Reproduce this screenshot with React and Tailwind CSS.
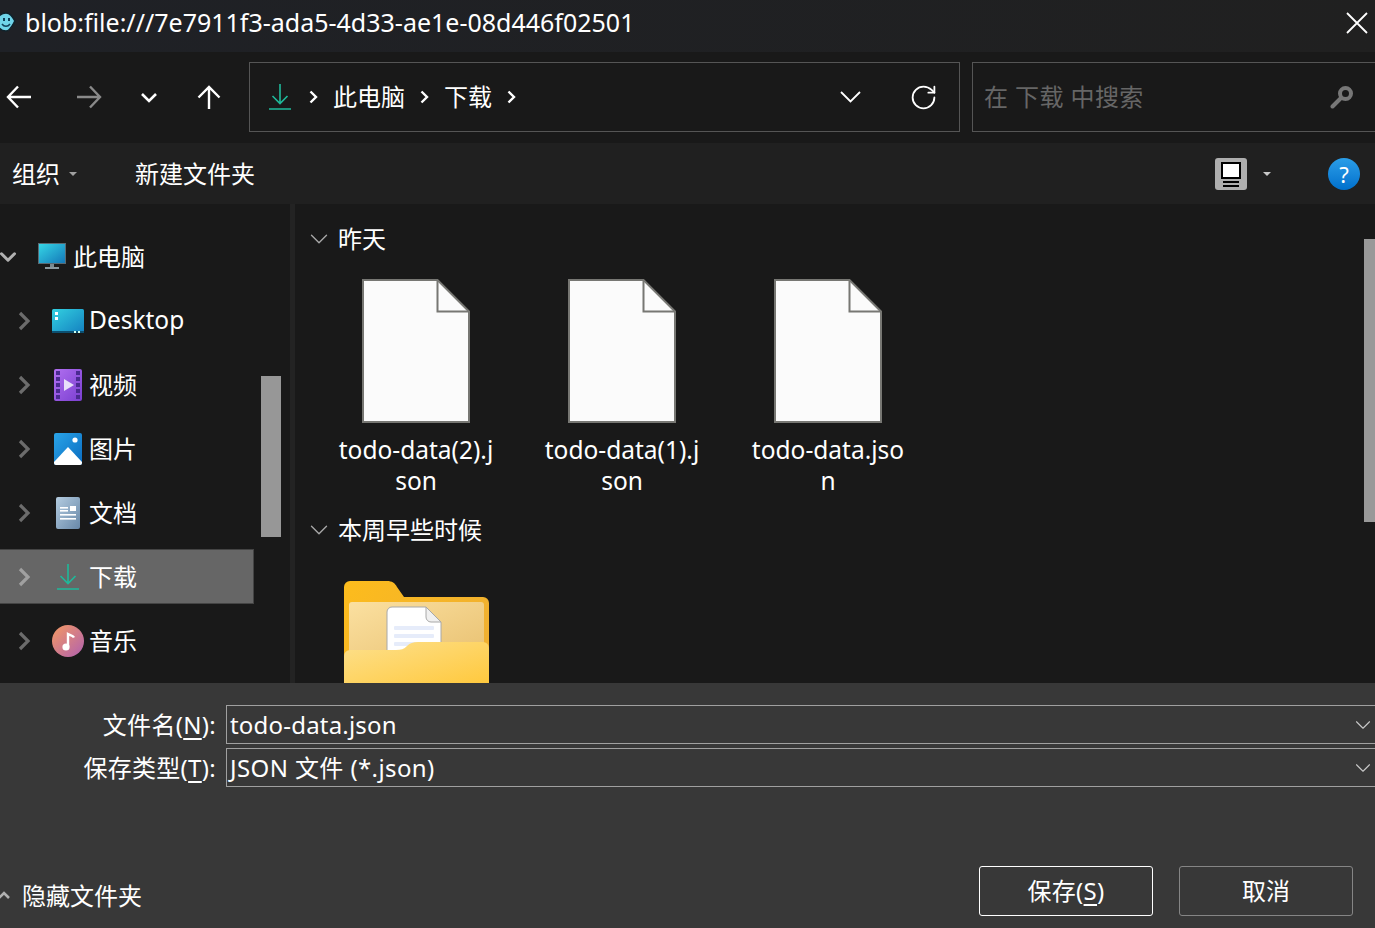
import { ChevronDown, RotateCw } from 'lucide-react'

const FONT = 'font-["Noto_Sans","Noto_Sans_CJK_SC",sans-serif]'

// ── Small line glyphs ────────────────────────────────────────────
function Arrow({ d, className = '', width = 26, height = 24, strokeWidth = 2.4 }) {
  return (
    <svg width={width} height={height} viewBox={`0 0 ${width} ${height}`} fill="none" stroke="currentColor" strokeWidth={strokeWidth} className={`shrink-0 ${className}`}>
      <path d={d} />
    </svg>
  )
}

function Crumb({ className = '' }) {
  return (
    <svg width="9" height="14" viewBox="0 0 9 14" fill="none" stroke="#ffffff" strokeWidth="2.400" className={`shrink-0 ${className}`}>
      <path d="M1.500 1.500L7 7l-5.500 5.500" />
    </svg>
  )
}

function AppIcon() {
  return (
    <svg width="19" height="20" viewBox="0 0 19 20" className="-ml-[3px] mr-[9px] shrink-0">
      <path d="M0 9a9 9 0 019-8c4 0 6 3 9 8-3 5-5 10-9 10a9 9 0 01-9-10z" fill="#6fd4ea" stroke="#10232c" strokeWidth="1.500" />
      <rect x="6" y="6" width="2" height="3" fill="#10405a" />
      <rect x="11" y="6" width="2" height="3" fill="#10405a" />
      <path d="M5 12c2 3 6 3 8 0" fill="none" stroke="#10405a" strokeWidth="1.500" />
    </svg>
  )
}

// ── Navigation tree icons ────────────────────────────────────────
function DownloadIcon({ size = 26 }) {
  return (
    <svg width={size} height={size} viewBox="0 0 26 26" fill="none" stroke="#1fb99a" strokeWidth="1.6">
      <path d="M13 0v19M5.500 12l7.500 7.500 7.500-7.500M2 25h22" />
    </svg>
  )
}

function PcIcon() {
  return (
    <svg width="30" height="27" viewBox="0 0 30 27">
      <defs>
        <linearGradient id="pc" x1="0" y1="0" x2="1" y2="1">
          <stop offset="0" stopColor="#35d6e6" />
          <stop offset="1" stopColor="#1478b8" />
        </linearGradient>
      </defs>
      <rect x="1" y="0" width="28" height="21" fill="#5a6a72" />
      <rect x="2" y="1" width="26" height="19" fill="url(#pc)" />
      <rect x="13" y="21" width="4" height="3" fill="#7a8a90" />
      <rect x="8" y="24" width="14" height="2" fill="#8a989e" />
    </svg>
  )
}

function DesktopIcon() {
  return (
    <svg width="32" height="24" viewBox="0 0 32 24">
      <defs>
        <linearGradient id="desk" x1="0" y1="0" x2="1" y2="1">
          <stop offset="0" stopColor="#32d0e0" />
          <stop offset="1" stopColor="#1480c0" />
        </linearGradient>
      </defs>
      <rect width="32" height="24" rx="1.500" fill="url(#desk)" />
      <rect y="22" width="32" height="2" fill="#0c4f70" />
      <rect x="3" y="3" width="3" height="3" fill="#fff" />
      <rect x="3" y="8" width="3" height="3" fill="#fff" />
      <rect x="22" y="22" width="2" height="2" fill="#cfe" />
      <rect x="26" y="22" width="2" height="2" fill="#cfe" />
    </svg>
  )
}

function VideoIcon() {
  const holes = [2, 8, 14, 20, 26]
  return (
    <svg width="28" height="32" viewBox="0 0 28 32">
      <defs>
        <linearGradient id="vid" x1="0" y1="0" x2="1" y2="1">
          <stop offset="0" stopColor="#b16ff0" />
          <stop offset="1" stopColor="#7a3fd0" />
        </linearGradient>
      </defs>
      <rect width="28" height="32" rx="2" fill="url(#vid)" />
      {holes.map(y => (
        <g key={y} fill="#4a2a90">
          <rect x="2" y={y} width="4" height="4" />
          <rect x="22" y={y} width="4" height="4" />
        </g>
      ))}
      <path d="M10 10l10 6-10 6z" fill="#e8e0fa" />
    </svg>
  )
}

function PictureIcon() {
  return (
    <svg width="28" height="32" viewBox="0 0 28 32">
      <defs>
        <linearGradient id="pic" x1="0" y1="0" x2="1" y2="1">
          <stop offset="0" stopColor="#2aa4e8" />
          <stop offset="1" stopColor="#0a6cc0" />
        </linearGradient>
      </defs>
      <rect width="28" height="32" rx="2" fill="url(#pic)" />
      <circle cx="21" cy="7" r="2.600" fill="#fff" />
      <path d="M0 29L14 14l14 15v1a2 2 0 01-2 2H2a2 2 0 01-2-2z" fill="#fff" />
    </svg>
  )
}

function DocIcon() {
  return (
    <svg width="24" height="32" viewBox="0 0 24 32">
      <defs>
        <linearGradient id="doc" x1="0" y1="0" x2="1" y2="1">
          <stop offset="0" stopColor="#b4cce0" />
          <stop offset="1" stopColor="#6888a8" />
        </linearGradient>
      </defs>
      <rect width="24" height="32" rx="2" fill="url(#doc)" />
      <g fill="#fff">
        <rect x="14" y="9" width="6" height="5" />
        <rect x="4" y="10" width="8" height="1.600" />
        <rect x="4" y="13" width="8" height="1.600" />
        <rect x="4" y="17" width="16" height="1.600" />
        <rect x="4" y="21" width="16" height="1.600" />
      </g>
    </svg>
  )
}

function MusicIcon() {
  return (
    <svg width="32" height="32" viewBox="0 0 32 32">
      <defs>
        <linearGradient id="mus" x1="0" y1="0" x2="1" y2="1">
          <stop offset="0" stopColor="#f59a62" />
          <stop offset="1" stopColor="#b060b0" />
        </linearGradient>
      </defs>
      <circle cx="16" cy="16" r="16" fill="url(#mus)" />
      <circle cx="14" cy="22" r="3.600" fill="#fff" />
      <path d="M16 22V9c2 1 5 1.500 6 3.500" stroke="#fff" strokeWidth="2.400" fill="none" />
    </svg>
  )
}

// ── File and folder pictures ─────────────────────────────────────
function FileIcon() {
  return (
    <svg width="108" height="144" viewBox="0 0 108 144" className="block">
      <path d="M1 1h74.500L107 32.500V143H1z" fill="#fbfbfb" stroke="#777773" strokeWidth="2" />
      <path d="M75.500 1v31.500H107" fill="none" stroke="#777773" strokeWidth="2" />
    </svg>
  )
}

function FolderIcon() {
  return (
    <svg width="145" height="102" viewBox="0 0 145 102" className="block">
      <defs>
        <linearGradient id="fbk" x1="0" y1="0" x2="1" y2="0.500">
          <stop offset="0" stopColor="#fdbc1c" />
          <stop offset="1" stopColor="#f0b030" />
        </linearGradient>
        <linearGradient id="fin" x1="0" y1="0" x2="1" y2="1">
          <stop offset="0" stopColor="#fbe0a0" />
          <stop offset="1" stopColor="#e8c070" />
        </linearGradient>
        <linearGradient id="ffr" x1="0" y1="0" x2="1" y2="1">
          <stop offset="0" stopColor="#fde08c" />
          <stop offset="1" stopColor="#ffc93e" />
        </linearGradient>
      </defs>
      <path d="M0 102V6a6 6 0 016-6h37c5 0 8 2 10 6l7 10h79a6 6 0 016 6v80z" fill="url(#fbk)" />
      <rect x="5" y="21" width="135" height="60" rx="3" fill="url(#fin)" />
      <path d="M43 31a5 5 0 015-5h34l15 15v40H43z" fill="#fff" stroke="#a8a8a8" strokeWidth="1" />
      <path d="M82 26v10a5 5 0 005 5h10z" fill="#f0f0f0" stroke="#a8a8a8" strokeWidth="1" />
      <rect x="50" y="45" width="40" height="4" rx="1" fill="#e6ecfa" />
      <rect x="50" y="53" width="40" height="4" rx="1" fill="#e6ecfa" />
      <rect x="50" y="61" width="40" height="4" rx="1" fill="#e6ecfa" />
      <path d="M0 102V75a6 6 0 016-6h46c5 0 8-1 11-4 3-3 6-4 11-4h65a6 6 0 016 6v35z" fill="url(#ffr)" />
    </svg>
  )
}

// ── Navigation tree row ──────────────────────────────────────────
function TreeRow({ icon, label, selected, textClass = 'text-[24px]' }) {
  return (
    <div className={`mb-[9px] flex h-[55px] items-center ${selected ? 'border-y border-r border-[#444444] bg-[#666666]' : ''}`}>
      <div className="flex w-[48px] shrink-0 items-center justify-center">
        <svg width="14" height="20" viewBox="0 0 14 20" fill="none" stroke={selected ? '#a0a0a0' : '#6c6c6c'} strokeWidth="3.200">
          <path d="M3 2l8 8-8 8" />
        </svg>
      </div>
      <div className="flex w-[39px] shrink-0 items-center justify-center">{icon}</div>
      <span className={`${textClass} ml-[2px] leading-none text-white`}>{label}</span>
    </div>
  )
}

const TREE = [
  { label: 'Desktop', icon: <DesktopIcon />, textClass: 'text-[24.500px]' },
  { label: '视频', icon: <VideoIcon /> },
  { label: '图片', icon: <PictureIcon /> },
  { label: '文档', icon: <DocIcon /> },
  { label: '下载', icon: <DownloadIcon />, selected: true },
  { label: '音乐', icon: <MusicIcon /> },
]

const FILES = [
  ['todo-data(2).j', 'son'],
  ['todo-data(1).j', 'son'],
  ['todo-data.jso', 'n'],
]

function Group({ title, className = '' }) {
  return (
    <div className={`flex h-[30px] items-center ${className}`}>
      <ChevronDown size={30} strokeWidth={1.1} className="ml-[8px] mr-[4px] text-[#a8a8a8]" />
      <span className="text-[24px] leading-none text-white">{title}</span>
    </div>
  )
}

function ComboRow({ label, hotkey, value, valueClass = '', className = '' }) {
  return (
    <div className={`flex items-center ${className}`}>
      <label className="w-[216px] text-right text-[24px] leading-none tracking-[0.3px] text-white">
        {label}(<span className="underline underline-offset-4">{hotkey}</span>):
      </label>
      <div className="ml-[10px] flex h-[39px] flex-1 items-center justify-between border border-r-0 border-[#a0a0a0] pl-[3px]">
        <span className={`text-[24px] leading-none text-white ${valueClass}`}>{value}</span>
        <ChevronDown size={26} strokeWidth={1} className="-mr-[1px] text-[#c8c8c8]" />
      </div>
    </div>
  )
}

export default function App() {
  return (
    <div className={`flex h-[928px] w-[1375px] flex-col overflow-hidden bg-[#191919] ${FONT}`}>
      {/* Title bar */}
      <div className="flex h-[52px] shrink-0 items-start justify-between bg-gradient-to-r from-[#1f2126] to-[#202020]">
        <div className="flex items-center pt-[7px]">
          <AppIcon />
          <span className="text-[25px] leading-[30px] text-white">blob:file:///7e7911f3-ada5-4d33-ae1e-08d446f02501</span>
        </div>
        <Arrow d="M1 1l20 20M21 1L1 21" width={22} height={22} strokeWidth={1.8} className="mr-[7px] mt-[12px] text-white" />
      </div>

      {/* Address bar */}
      <div className="flex h-[91px] shrink-0 items-center gap-[12px] pb-[1px]">
        <div className="flex w-[237px] shrink-0 items-center">
          <Arrow d="M25 12H2M12 1.500L2 12l10 10.500" className="ml-[6px] text-white" />
          <Arrow d="M1 12h23M14 1.500L24 12 14 22.500" className="ml-[44px] text-[#8a8a8a]" />
          <Arrow d="M2 2l7 7 7-7" width={18} height={11} strokeWidth={2.600} className="ml-[38px] text-white" />
          <Arrow d="M12 24V2M1.500 12.500L12 2l10.500 10.500" width={24} height={24} className="ml-[39px] text-white" />
        </div>
        <div className="flex h-[70px] w-[711px] shrink-0 items-center border border-[#555555] pl-[17px] pr-[21px]">
          <DownloadIcon />
          <Crumb className="ml-[16px]" />
          <span className="ml-[15px] text-[24px] leading-none text-white">此电脑</span>
          <Crumb className="ml-[15px]" />
          <span className="ml-[15px] text-[24px] leading-none text-white">下载</span>
          <Crumb className="ml-[15px]" />
          <Arrow d="M1 1l9.500 9.500L20 1" width={21} height={12} strokeWidth={1.800} className="ml-auto text-white" />
          <RotateCw size={29} strokeWidth={1.500} className="ml-[48px] text-white" />
        </div>
        <div className="flex h-[70px] flex-1 items-center justify-between border border-r-0 border-[#555555] pl-[11px] pr-[21px]">
          <span className="text-[24px] leading-none tracking-[0.4px] text-[#666666]">在 下载 中搜索</span>
          <svg width="24" height="24" viewBox="0 0 24 24" fill="none" stroke="#777777">
            <circle cx="15.500" cy="8.500" r="5.500" strokeWidth="4" />
            <path d="M11 13l-8.500 8.500" strokeWidth="4" strokeLinecap="round" />
          </svg>
        </div>
      </div>

      {/* Toolbar */}
      <div className="flex h-[61px] shrink-0 items-center bg-[#202020]">
        <span className="ml-[12px] text-[24px] leading-none text-white">组织</span>
        <span className="ml-[9px] h-0 w-0 border-x-[4px] border-t-[4px] border-x-transparent border-t-[#a0a0a0]" />
        <span className="ml-[58px] text-[24px] leading-none text-white">新建文件夹</span>
        <div className="ml-auto mr-[16px] flex h-[32px] w-[32px] flex-col items-center rounded-[3px] bg-[#aeaeae] pt-[4px]">
          <span className="h-[17px] w-[20px] border-2 border-black bg-white" />
          <span className="mt-[2px] h-[2px] w-[16px] bg-black" />
          <span className="mt-[2px] h-[2px] w-[16px] bg-black" />
        </div>
        <span className="mr-[57px] h-0 w-0 border-x-[4px] border-t-[4px] border-x-transparent border-t-[#c8c8c8]" />
        <div className="mr-[15px] flex h-[32px] w-[32px] items-center justify-center rounded-full bg-gradient-to-b from-[#2a9ee8] to-[#0070cc] text-[22px] leading-none text-white">?</div>
      </div>

      {/* Body */}
      <div className="flex h-[479px] shrink-0 overflow-hidden">
        {/* Navigation pane */}
        <div className="relative w-[295px] shrink-0 overflow-hidden border-r-[5px] border-[#232323]">
          <div className="w-[254px] pt-[25px]">
            <div className="mb-[9px] flex h-[55px] items-center">
              <ChevronDown size={26} strokeWidth={2.800} className="-ml-[5px] text-[#b0b0b0]" />
              <div className="ml-[16px] flex w-[30px] shrink-0"><PcIcon /></div>
              <span className="ml-[6px] text-[24px] leading-none text-white">此电脑</span>
            </div>
            {TREE.map(row => <TreeRow key={row.label} {...row} />)}
          </div>
          {/* Scrollbar thumb */}
          <div className="absolute left-[261px] top-[172px] h-[161px] w-[20px] bg-[#979797]" />
        </div>

        {/* File list */}
        <div className="relative flex-1 overflow-hidden pl-[1px] pt-[20px]">
          <Group title="昨天" />
          <div className="mt-[25px] flex pl-[17px]">
            {FILES.map(lines => (
              <div key={lines[0]} className="flex w-[206px] flex-col items-center">
                <FileIcon />
                <div className="mt-[11px] text-center text-[24.500px] leading-[31px] text-white">
                  {lines.map(line => <div key={line}>{line}</div>)}
                </div>
              </div>
            ))}
          </div>
          <Group title="本周早些时候" className="mt-[19px]" />
          <div className="ml-[48px] mt-[36px]">
            <FolderIcon />
          </div>
          <div className="absolute right-0 top-[35px] h-[283px] w-[11px] bg-[#999999]" />
        </div>
      </div>

      {/* Save form */}
      <div className="flex flex-1 flex-col bg-[#383838]">
        <ComboRow label="文件名" hotkey="N" value="todo-data.json" valueClass="tracking-[0.2px]" className="mt-[22px]" />
        <ComboRow label="保存类型" hotkey="T" value="JSON 文件 (*.json)" valueClass="tracking-[0.4px]" className="mt-[4px]" />
        <div className="mt-auto flex items-center pb-[12px]">
          <svg width="12" height="9" viewBox="0 0 12 9" fill="none" stroke="#b0b0b0" strokeWidth="2.600" className="-ml-[2px] mt-[6px] shrink-0">
            <path d="M1 8l5-5 5 5" />
          </svg>
          <span className="ml-[12px] mt-[10px] text-[24px] leading-none text-white">隐藏文件夹</span>
          <button className="ml-auto flex h-[50px] w-[174px] items-center justify-center rounded-[3px] border border-white text-[24px] leading-none tracking-[0.3px] text-white">
            保存(<span className="underline underline-offset-4">S</span>)
          </button>
          <button className="ml-[26px] mr-[22px] flex h-[50px] w-[174px] items-center justify-center rounded-[3px] border border-[#858585] text-[24px] leading-none text-white">
            取消
          </button>
        </div>
      </div>
    </div>
  )
}
